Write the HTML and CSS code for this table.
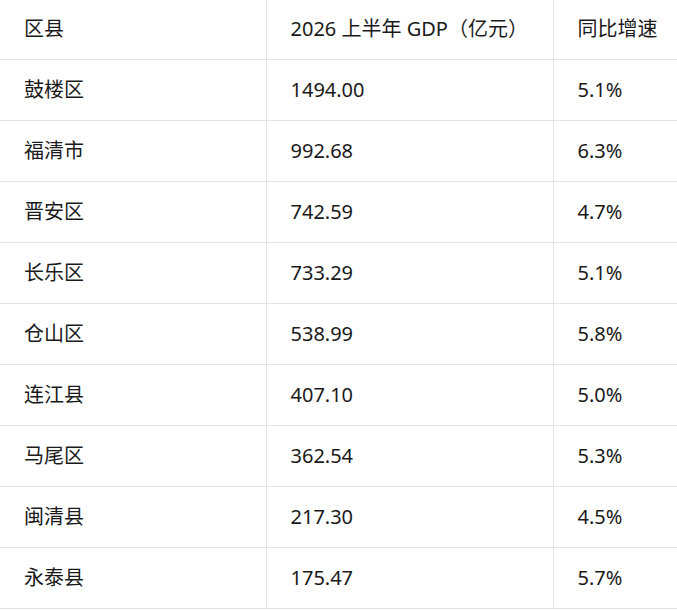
FILE: index.html
```html
<!DOCTYPE html>
<html lang="zh-CN">
<head>
<meta charset="utf-8">
<title>2026 上半年 GDP</title>
<link rel="stylesheet" href="styles.css">
</head>
<body>
<table class="gdp-table">
  <colgroup>
    <col class="col-name">
    <col class="col-gdp">
    <col class="col-rate">
  </colgroup>
  <thead>
    <tr><th>区县</th><th>2026 上半年 GDP（亿元）</th><th>同比增速</th></tr>
  </thead>
  <tbody>
    <tr><td>鼓楼区</td><td>1494.00</td><td>5.1%</td></tr>
    <tr><td>福清市</td><td>992.68</td><td>6.3%</td></tr>
    <tr><td>晋安区</td><td>742.59</td><td>4.7%</td></tr>
    <tr><td>长乐区</td><td>733.29</td><td>5.1%</td></tr>
    <tr><td>仓山区</td><td>538.99</td><td>5.8%</td></tr>
    <tr><td>连江县</td><td>407.10</td><td>5.0%</td></tr>
    <tr><td>马尾区</td><td>362.54</td><td>5.3%</td></tr>
    <tr><td>闽清县</td><td>217.30</td><td>4.5%</td></tr>
    <tr><td>永泰县</td><td>175.47</td><td>5.7%</td></tr>
  </tbody>
</table>
</body>
</html>
```
FILE: styles.css
```css
html, body {
  margin: 0;
  padding: 0;
  overflow: hidden;
  background: #ffffff;
}
body {
  font-family: "Noto Sans", "Noto Sans CJK SC", sans-serif;
  color: #1a1a1a;
}
.gdp-table {
  border-collapse: collapse;
  table-layout: fixed;
  width: 700px;
  font-size: 20px;
}
.col-name { width: 266px; }
.col-gdp { width: 287px; }
.col-rate { width: 147px; }
.gdp-table th,
.gdp-table td {
  text-align: left;
  font-weight: 400;
  padding: 0 24px;
  line-height: 28px;
  border-bottom: 1px solid #e3e3e3;
  border-right: 1px solid #e3e3e3;
  white-space: nowrap;
  box-sizing: border-box;
}
.gdp-table th {
  height: 59px;
}
.gdp-table td {
  height: 61px;
}
```
